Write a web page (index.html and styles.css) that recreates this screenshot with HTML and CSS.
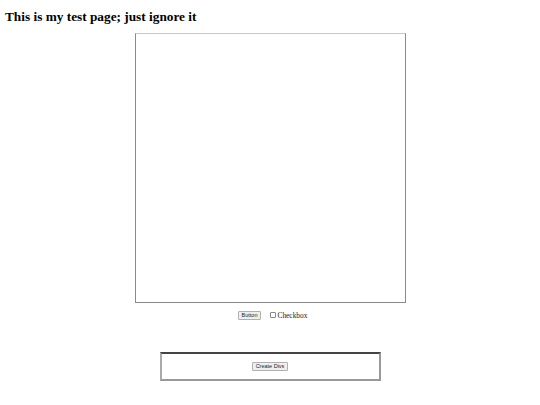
FILE: index.html
```html
<!DOCTYPE html>
<html>
<head>
<meta charset="utf-8">
<link rel="stylesheet" href="styles.css">
</head>
<body>
<h1 class="title">This is my test page; just ignore it</h1>
<div class="canvas"></div>
<div class="controls">
  <button class="btn">Button</button>
  <label class="check"><span class="box"></span>Checkbox</label>
</div>
<div class="panel">
  <button class="btn">Create Divs</button>
</div>
</body>
</html>
```
FILE: styles.css
```css
html, body { margin: 0; padding: 0; background: #fff; }
body { padding: 0 5px; font-family: "Liberation Serif", serif; color: #000; }
.title { font-size: 13.3px; font-weight: bold; margin: 0; padding-top: 9px; line-height: 15px; }
.canvas {
  width: 269px; height: 268px;
  margin: 9px auto 0;
  border: 1px solid #8a8a8a;
  border-top-color: #c8c8c8;
}
.controls {
  display: flex; justify-content: center; align-items: center;
  gap: 9px; margin-top: 7px; height: 10px; margin-left: 5px;
}
.btn {
  font-family: "Liberation Sans", Arial, sans-serif;
  font-size: 5.5px; line-height: 7px;
  padding: 0 3px; margin: 0;
  background: #efefef; color: #222;
  border: 1px solid #b0b0b0; border-radius: 1px;
  height: 9px;
}
.check { display: flex; align-items: center; font-size: 7.4px; gap: 1px; color: #222; }
.box { width: 4px; height: 4px; border: 1px solid #888; border-radius: 1px; display: inline-block; }
.panel {
  width: 217px; height: 25px;
  margin: 32px auto 0;
  border: 2px solid #999;
  border-top-color: #444;
  border-left-color: #aaa;
  display: flex; justify-content: center; align-items: center;
}
```
